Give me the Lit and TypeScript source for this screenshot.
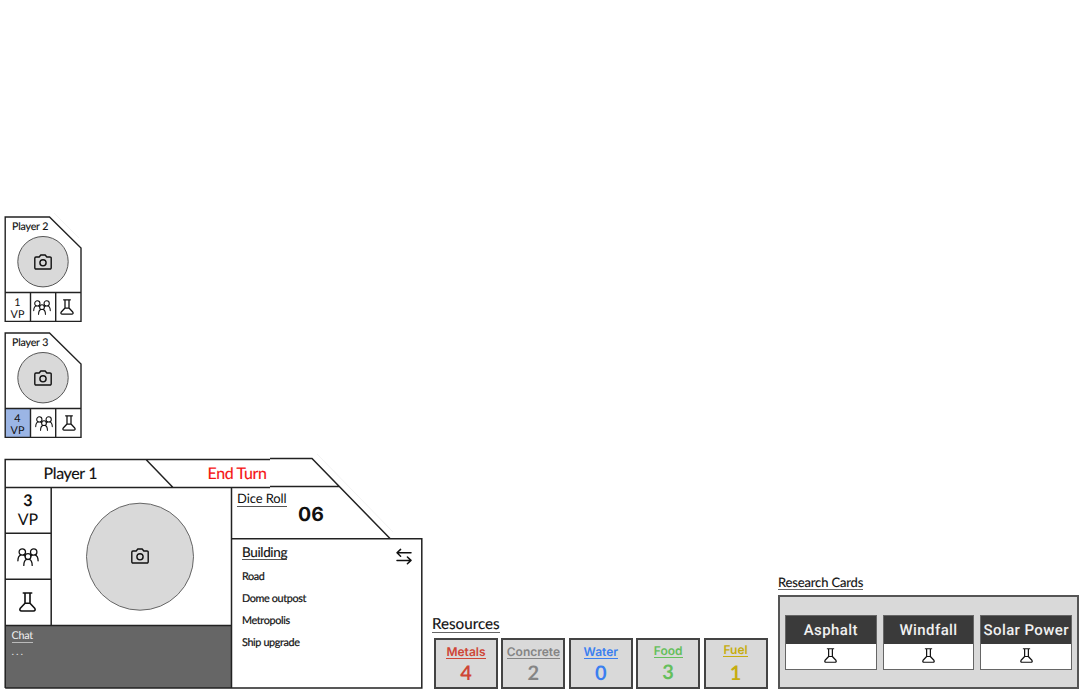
import { LitElement, html, css, svg } from "lit";
import { customElement, property } from "lit/decorators.js";

@customElement("game-icon")
class GameIcon extends LitElement {
  @property() name = "flask";
  static styles = css`
    :host { display: block; }
    svg { display: block; width: 100%; height: 100%; overflow: visible; fill: none; stroke: currentColor; stroke-linejoin: round; stroke-linecap: round; }
  `;
  render() {
    if (this.name === "camera")
      return html`<svg viewBox="0 0 18 16" stroke-width="1.4">
        <path d="M2 3h3.2L6.8 1h4.4L12.8 3H16a1.2 1.2 0 0 1 1.2 1.2v9.6A1.2 1.2 0 0 1 16 15H2a1.2 1.2 0 0 1-1.2-1.2V4.2A1.2 1.2 0 0 1 2 3z" />
        <circle cx="9" cy="8.8" r="3.1" />
      </svg>`;
    if (this.name === "people")
      return html`<svg viewBox="0 0 22 18" stroke-width="1.3">
        <circle cx="5.3" cy="4" r="3.2" /><circle cx="16.7" cy="4" r="3.2" /><circle cx="11" cy="8.6" r="2.9" />
        <path d="M.9 12.8c0-3 1-5.2 3-6M21.1 12.8c0-3-1-5.2-3-6M6.8 17.4c0-3.4 1.3-5.6 3-6.1M15.2 17.4c0-3.4-1.3-5.6-3-6.1M6.4 7c.6.2 1.2.6 1.7 1.1M15.6 7c-.6.2-1.2.6-1.7 1.1" />
      </svg>`;
    if (this.name === "swap")
      return html`<svg viewBox="0 0 16 16" stroke-width="1.5">
        <path d="M15 4.8H1M4.6 1.4L1 4.8l3.6 3.4M1 12.4h14M11.4 9l3.6 3.4-3.6 3.4" />
      </svg>`;
    return html`<svg viewBox="0 0 17 20" stroke-width="1.6">
      <path d="M4.3 1h8.4M6 1v10.3L1.3 16.3C.3 17.7 1 19 2.5 19h12c1.5 0 2.2-1.3 1.2-2.7L11 11.3V1M6 11.3h5" />
    </svg>`;
  }
}

@customElement("rival-card")
class RivalCard extends LitElement {
  @property() name = "";
  @property() points = "";
  @property({ type: Boolean, reflect: true }) leading = false;
  static styles = css`
    :host { display: block; position: relative; width: 78px; height: 107px; font-family: Lato, sans-serif; color: #111; text-rendering: geometricPrecision; }
    .frame { position: absolute; inset: 0; width: 78px; height: 107px; overflow: visible; fill: none; stroke: #222; stroke-width: 1.4; }
    .circle { fill: #d9d9d9; stroke: #555; stroke-width: 1; }
    .lead { fill: #9bb5e5; stroke: none; }
    .glow { stroke: #f3f3f3; stroke-width: 1; }
    .body { position: relative; display: flex; flex-direction: column; height: 107px; }
    .name { font-size: 10.6px; line-height: 12px; padding: 5px 0 0 8px; height: 12px; letter-spacing: -0.15px; -webkit-text-stroke: 0.15px #111; }
    .photo { height: 59px; display: flex; align-items: center; justify-content: center; }
    .photo game-icon { width: 18px; height: 16px; margin-bottom: 1px; }
    .stats { display: grid; grid-template-columns: 27px 22px 27px; height: 30px; align-items: center; justify-items: center; }
    :host([leading]) .stats { grid-template-columns: 27px 26px 24px; }
    .vp { font-size: 10.8px; line-height: 11.6px; text-align: center; padding-top: 3px; }
    .people { width: 18px; height: 15px; }
    .flask { width: 14px; height: 16px; }
  `;
  render() {
    return html`
      <svg class="frame" viewBox="0 0 78 107">
        ${this.leading ? svg`<path class="lead" d="M1 76.5h25.5V105H1z" />` : svg`<path class="glow" d="M50-3L75 22" />`}
        <path d="M1.2 1h44.3L77 32v73.4H1.2zM1.2 76.5H77M26.5 76.5v29M51.7 76.5v29" />
        <circle class="circle" cx="39" cy="45.7" r="25.2" />
      </svg>
      <div class="body">
        <div class="name">${this.name}</div>
        <div class="photo"><game-icon name="camera"></game-icon></div>
        <div class="stats">
          <div class="vp">${this.points}<br />VP</div>
          <game-icon class="people" name="people"></game-icon>
          <game-icon class="flask" name="flask"></game-icon>
        </div>
      </div>`;
  }
}

@customElement("player-panel")
class PlayerPanel extends LitElement {
  static styles = css`
    :host { display: block; position: relative; width: 420px; height: 234px; font-family: Lato, sans-serif; color: #111; text-rendering: geometricPrecision; }
    .frame { position: absolute; inset: 0; width: 420px; height: 234px; overflow: visible; fill: none; stroke: #222; stroke-width: 1.5; }
    .circle { fill: #d9d9d9; stroke: #666; stroke-width: 1; }
    .chatfill { fill: #666; stroke: none; }
    .glow { stroke: #f3f3f3; stroke-width: 1; }
    .grid { position: relative; display: grid; grid-template-columns: 47px 180px 193px; grid-template-rows: 30px 46px 46px 46px 66px; height: 234px; }
    .tabs { grid-column: 1 / 4; display: flex; font-size: 16px; line-height: 20px; padding-top: 7px; letter-spacing: -0.35px; -webkit-text-stroke: 0.15px; }
    .me { padding-left: 39.5px; width: 163.5px; box-sizing: border-box; }
    .end { color: #f51414; padding-left: 40px; }
    .cell { grid-column: 1; display: flex; align-items: center; justify-content: center; text-align: center; font-size: 16px; line-height: 19px; }
    .score { padding: 0 0 0 1px; }
    .cell b { font-weight: 700; }
    .people { width: 22px; height: 18px; margin-top: 2px; }
    .flask { width: 17px; height: 20px; }
    .photo { grid-column: 2; grid-row: 2 / 5; display: flex; align-items: center; justify-content: center; padding-right: 3px; }
    .photo game-icon { width: 18px; height: 16px; }
    .side { grid-column: 3; grid-row: 2 / 6; display: flex; flex-direction: column; padding-left: 6px; }
    .dice { display: flex; height: 51px; }
    .u { border-bottom: 1px solid #555; align-self: flex-start; }
    .dl { font-size: 13px; line-height: 15px; margin-top: 4px; height: 15px; letter-spacing: -0.1px; }
    .roll { font: 700 19.5px/24px Inter, sans-serif; margin: 15px 0 0 11.5px; }
    .build { display: flex; justify-content: space-between; padding: 7px 12px 0 5px; height: 20.5px; }
    .bl { font-size: 13.5px; line-height: 15px; height: 14px; letter-spacing: -0.35px; -webkit-text-stroke: 0.15px; }
    .build game-icon { width: 16px; height: 16px; margin-top: 3px; }
    .opt { font-size: 10.8px; line-height: 22.2px; padding-left: 5px; letter-spacing: -0.35px; -webkit-text-stroke: 0.2px #111; }
    .chat { grid-column: 1 / 3; grid-row: 5; display: flex; flex-direction: column; color: #f2f2f2; font-size: 10.8px; line-height: 12px; padding: 5px 0 0 7.5px; letter-spacing: -0.3px; }
    .chat .u { border-color: #bbb; }
    .dots { line-height: 15px; margin-top: 1px; letter-spacing: 2px; color: #ddd; }
  `;
  render() {
    return html`
      <svg class="frame" viewBox="0 0 420 234">
        <path class="chatfill" d="M1 168.5h226.5V231H1z" />
        <path class="glow" d="M313-3L389 75" />
        <path d="M1.2 231V2.5H266M1.2 30.5H266M266 1.5h42L386 81.5M266 29.5h69.5M142 2.5l27 28M47.2 30.5v138M1.2 76.2h46M1.2 122.3h46M1.2 168.5h226.3M227.5 30.5V231M227.5 81.8h190.3V231H1.2" />
        <circle class="circle" cx="136" cy="99.7" r="53.5" />
      </svg>
      <div class="grid">
        <div class="tabs"><span class="me">Player 1</span><span class="end">End Turn</span></div>
        <div class="cell score"><span><b>3</b><br />VP</span></div>
        <div class="cell"><game-icon class="people" name="people"></game-icon></div>
        <div class="cell"><game-icon class="flask" name="flask"></game-icon></div>
        <div class="photo"><game-icon name="camera"></game-icon></div>
        <div class="side">
          <div class="dice"><span class="u dl">Dice Roll</span><span class="roll">06</span></div>
          <div class="build"><span class="u bl">Building</span><game-icon name="swap"></game-icon></div>
          ${["Road", "Dome outpost", "Metropolis", "Ship upgrade"].map((o) => html`<div class="opt">${o}</div>`)}
        </div>
        <div class="chat"><span class="u">Chat</span><span class="dots">...</span></div>
      </div>`;
  }
}

const resources = [
  { id: "metals", name: "Metals", n: 4 },
  { id: "concrete", name: "Concrete", n: 2 },
  { id: "water", name: "Water", n: 0 },
  { id: "food", name: "Food", n: 3 },
  { id: "fuel", name: "Fuel", n: 1 },
];

@customElement("app-root")
class AppRoot extends LitElement {
  static styles = css`
    :host { display: flex; flex-direction: column; justify-content: flex-end; width: 1080px; height: 691px; overflow: hidden; background: #fff; font-family: Lato, sans-serif; color: #111; text-rendering: geometricPrecision; }
    .rivals { display: flex; flex-direction: column; gap: 9px; padding: 0 0 18px 4px; }
    .dock { display: flex; align-items: flex-end; padding-left: 4px; height: 234px; }
    .resources { margin-left: 8px; width: 346px; padding-bottom: 2px; }
    h2 { margin: 0; display: inline-block; font-weight: 400; border-bottom: 1px solid #666; -webkit-text-stroke: 0.15px; }
    .rt { font-size: 15.2px; line-height: 18px; height: 17px; }
    .tiles { display: flex; gap: 3.4px; padding-left: 2px; margin-top: 5px; }
    .tile { box-sizing: border-box; width: 64px; height: 51px; flex: none; border: 2px solid #444; background: #d9d9d9; display: flex; flex-direction: column; align-items: center; }
    .label { font: 600 12px/14px Inter, sans-serif; margin-top: 5px; border-bottom: 1px solid currentColor; height: 13px; white-space: nowrap; }
    .count { font-size: 20px; line-height: 22px; font-weight: 700; margin-top: 3px; }
    .metals { color: #cf4636; }
    .concrete { color: #858585; }
    .concrete .label { font-weight: 600; }
    .water { color: #3b7ff0; }
    .food { color: #65bf5c; }
    .food .label { margin-top: 4px; }
    .fuel { color: #c6ad10; }
    .fuel .label { margin-top: 3px; }
    .fuel .count { margin-top: 5px; }
    .research { width: 302px; padding-bottom: 2px; }
    .ct { font-size: 13px; line-height: 16px; height: 15px; letter-spacing: -0.15px; }
    .rack { box-sizing: border-box; width: 301px; height: 94px; border: 2px solid #555; background: #d9d9d9; display: flex; gap: 6px; padding: 18px 0 0 5px; margin-top: 4px; }
    .card { box-sizing: border-box; flex: none; width: 91.7px; height: 55px; border: 1px solid #666; background: #fff; display: flex; flex-direction: column; align-items: center; }
    .title { align-self: stretch; height: 28px; background: #3a3a3a; color: #f0f0f0; font: 500 15px/29px Roboto, sans-serif; letter-spacing: 0.4px; text-align: center; white-space: nowrap; }
    .card game-icon { width: 13px; height: 15px; margin-top: 4px; }
  `;
  render() {
    return html`
      <div class="rivals">
        <rival-card name="Player 2" points="1"></rival-card>
        <rival-card name="Player 3" points="4" leading></rival-card>
      </div>
      <div class="dock">
        <player-panel></player-panel>
        <section class="resources">
          <h2 class="rt">Resources</h2>
          <div class="tiles">
            ${resources.map((r) => html`<div class="tile ${r.id}"><span class="label">${r.name}</span><span class="count">${r.n}</span></div>`)}
          </div>
        </section>
        <section class="research">
          <h2 class="ct">Research Cards</h2>
          <div class="rack">
            ${["Asphalt", "Windfall", "Solar Power"].map((c) => html`<div class="card"><div class="title">${c}</div><game-icon name="flask"></game-icon></div>`)}
          </div>
        </section>
      </div>`;
  }
}
